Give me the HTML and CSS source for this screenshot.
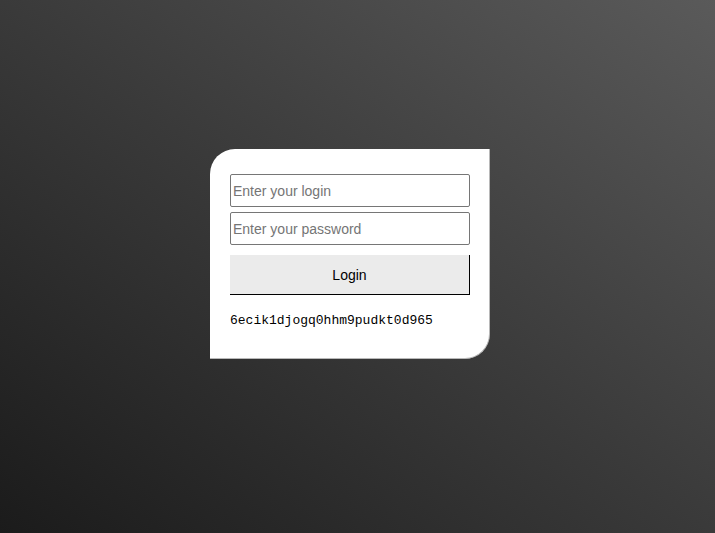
FILE: index.html
```html
<!DOCTYPE html>
<html>
<head>
<meta charset="utf-8">
<link rel="stylesheet" href="styles.css">
</head>
<body>
<div class="page">
  <form class="card">
    <input class="field" type="text" placeholder="Enter your login">
    <input class="field" type="password" placeholder="Enter your password">
    <button class="btn" type="button">Login</button>
    <div class="code">6ecik1djogq0hhm9pudkt0d965</div>
  </form>
</div>
</body>
</html>
```
FILE: styles.css
```css
html, body {
  margin: 0;
  height: 100%;
}
body {
  background: linear-gradient(to top right, #1b1b1b 0%, #3a3a3a 50%, #5a5a5a 100%);
  font-family: "Liberation Sans", Arial, sans-serif;
}
.page {
  padding: 149px 0 0 210px;
}
.card {
  box-sizing: border-box;
  width: 280px;
  height: 210px;
  background: #fff;
  border-radius: 25px 0 25px 0;
  border-right: 1px solid #b8b8b8;
  border-bottom: 1px solid #b8b8b8;
  padding: 25px 20px 0 20px;
  display: flex;
  flex-direction: column;
}
.field {
  box-sizing: border-box;
  width: 240px;
  height: 33px;
  margin: 0 0 5px 0;
  padding: 1px 2px;
  border: 1px solid #767676;
  border-radius: 2px;
  font-family: "Liberation Sans", Arial, sans-serif;
  font-size: 14px;
  color: #000;
}
.field::placeholder {
  color: #757575;
}
.btn {
  box-sizing: border-box;
  width: 240px;
  height: 40px;
  margin-top: 5px;
  background: #ebebeb;
  border: none;
  border-right: 1px solid #000;
  border-bottom: 1px solid #000;
  font-family: "Liberation Sans", Arial, sans-serif;
  font-size: 14px;
  color: #000;
}
.code {
  margin-top: 18px;
  font-family: "Liberation Mono", "Courier New", monospace;
  font-size: 13px;
  line-height: 15px;
  color: #000;
}
```
